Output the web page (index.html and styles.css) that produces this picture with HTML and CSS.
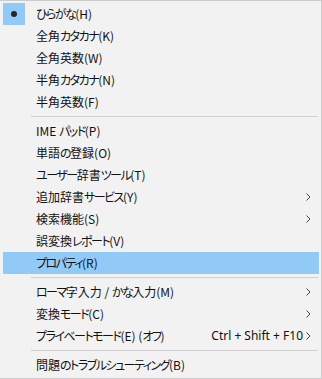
FILE: index.html
```html
<!DOCTYPE html>
<html lang="ja">
<head>
<meta charset="utf-8">
<link rel="stylesheet" href="styles.css">
</head>
<body>
<div class="menu">
  <div class="item"><span class="icon"><span class="check"><span class="dot"></span></span></span><span class="label"><span class="kana">ひらがな</span>(H)</span></div>
  <div class="item"><span class="icon"></span><span class="label">全角<span class="kana">カタカナ</span>(K)</span></div>
  <div class="item"><span class="icon"></span><span class="label">全角英数(W)</span></div>
  <div class="item"><span class="icon"></span><span class="label">半角<span class="kana">カタカナ</span>(N)</span></div>
  <div class="item"><span class="icon"></span><span class="label">半角英数(F)</span></div>
  <div class="sep"></div>
  <div class="item"><span class="icon"></span><span class="label">IME <span class="kana">パッド</span>(P)</span></div>
  <div class="item"><span class="icon"></span><span class="label">単語<span class="kana">の</span>登録(O)</span></div>
  <div class="item"><span class="icon"></span><span class="label"><span class="kana">ユーザー</span>辞書<span class="kana">ツール</span>(T)</span></div>
  <div class="item"><span class="icon"></span><span class="label">追加辞書<span class="kana">サービス</span>(Y)</span><span class="arrow"><svg width="5" height="8" viewBox="0 0 5 8"><path d="M0.5 0.5 L4 4 L0.5 7.5" fill="none" stroke="#444" stroke-width="1"/></svg></span></div>
  <div class="item"><span class="icon"></span><span class="label">検索機能(S)</span><span class="arrow"><svg width="5" height="8" viewBox="0 0 5 8"><path d="M0.5 0.5 L4 4 L0.5 7.5" fill="none" stroke="#444" stroke-width="1"/></svg></span></div>
  <div class="item"><span class="icon"></span><span class="label">誤変換<span class="kana">レポート</span>(V)</span></div>
  <div class="item hover"><span class="icon"></span><span class="label"><span class="kana">プロパティ</span>(R)</span></div>
  <div class="sep"></div>
  <div class="item"><span class="icon"></span><span class="label"><span class="kana">ローマ</span>字入力 / <span class="kana">かな</span>入力(M)</span><span class="arrow"><svg width="5" height="8" viewBox="0 0 5 8"><path d="M0.5 0.5 L4 4 L0.5 7.5" fill="none" stroke="#444" stroke-width="1"/></svg></span></div>
  <div class="item"><span class="icon"></span><span class="label">変換<span class="kana">モード</span>(C)</span><span class="arrow"><svg width="5" height="8" viewBox="0 0 5 8"><path d="M0.5 0.5 L4 4 L0.5 7.5" fill="none" stroke="#444" stroke-width="1"/></svg></span></div>
  <div class="item"><span class="icon"></span><span class="label"><span class="kana">プライベートモード</span>(E) (<span class="kana">オフ</span>)</span><span class="shortcut">Ctrl + Shift + F10</span><span class="arrow"><svg width="5" height="8" viewBox="0 0 5 8"><path d="M0.5 0.5 L4 4 L0.5 7.5" fill="none" stroke="#444" stroke-width="1"/></svg></span></div>
  <div class="sep"></div>
  <div class="item"><span class="icon"></span><span class="label">問題<span class="kana">のトラブルシューティング</span>(B)</span></div>
</div>
</body>
</html>
```
FILE: styles.css
```css
html, body {
  margin: 0;
  padding: 0;
  background: #f2f2f2;
}
.menu {
  box-sizing: border-box;
  width: 322px;
  height: 379px;
  background: #f2f2f2;
  border-top: 1px solid #cccccc;
  border-right: 1px solid #cccccc;
  border-bottom: 1px solid #cccccc;
  padding: 2px 2px 2px 3px;
  font-family: "Noto Sans CJK JP", "Noto Sans", sans-serif;
  font-feature-settings: "palt";
  font-size: 12px;
  color: #111;
}
.item {
  display: flex;
  align-items: center;
  height: 22px;
}
.item.hover {
  background: #91c9f7;
}
.icon {
  width: 33px;
  height: 22px;
  flex: none;
}
.check {
  display: flex;
  width: 22px;
  height: 22px;
  background: #91c9f7;
  align-items: center;
  justify-content: center;
}
.dot {
  width: 6px;
  height: 6px;
  border-radius: 50%;
  background: #262626;
}
.label {
  flex: 1;
  white-space: nowrap;
  line-height: 22px;
}
.kana {
  letter-spacing: -1.5px;
}
.shortcut {
  font-family: "Noto Sans", sans-serif;
  font-size: 12px;
  line-height: 22px;
  margin-right: 3px;
}
.arrow {
  width: 13px;
  display: flex;
  align-items: center;
  justify-content: flex-start;
}
.sep {
  height: 7px;
  margin-left: 28px;
  margin-right: 1px;
  display: flex;
  align-items: center;
}
.sep::before {
  content: "";
  display: block;
  width: 100%;
  height: 1px;
  background: #d0d0d0;
}
```
